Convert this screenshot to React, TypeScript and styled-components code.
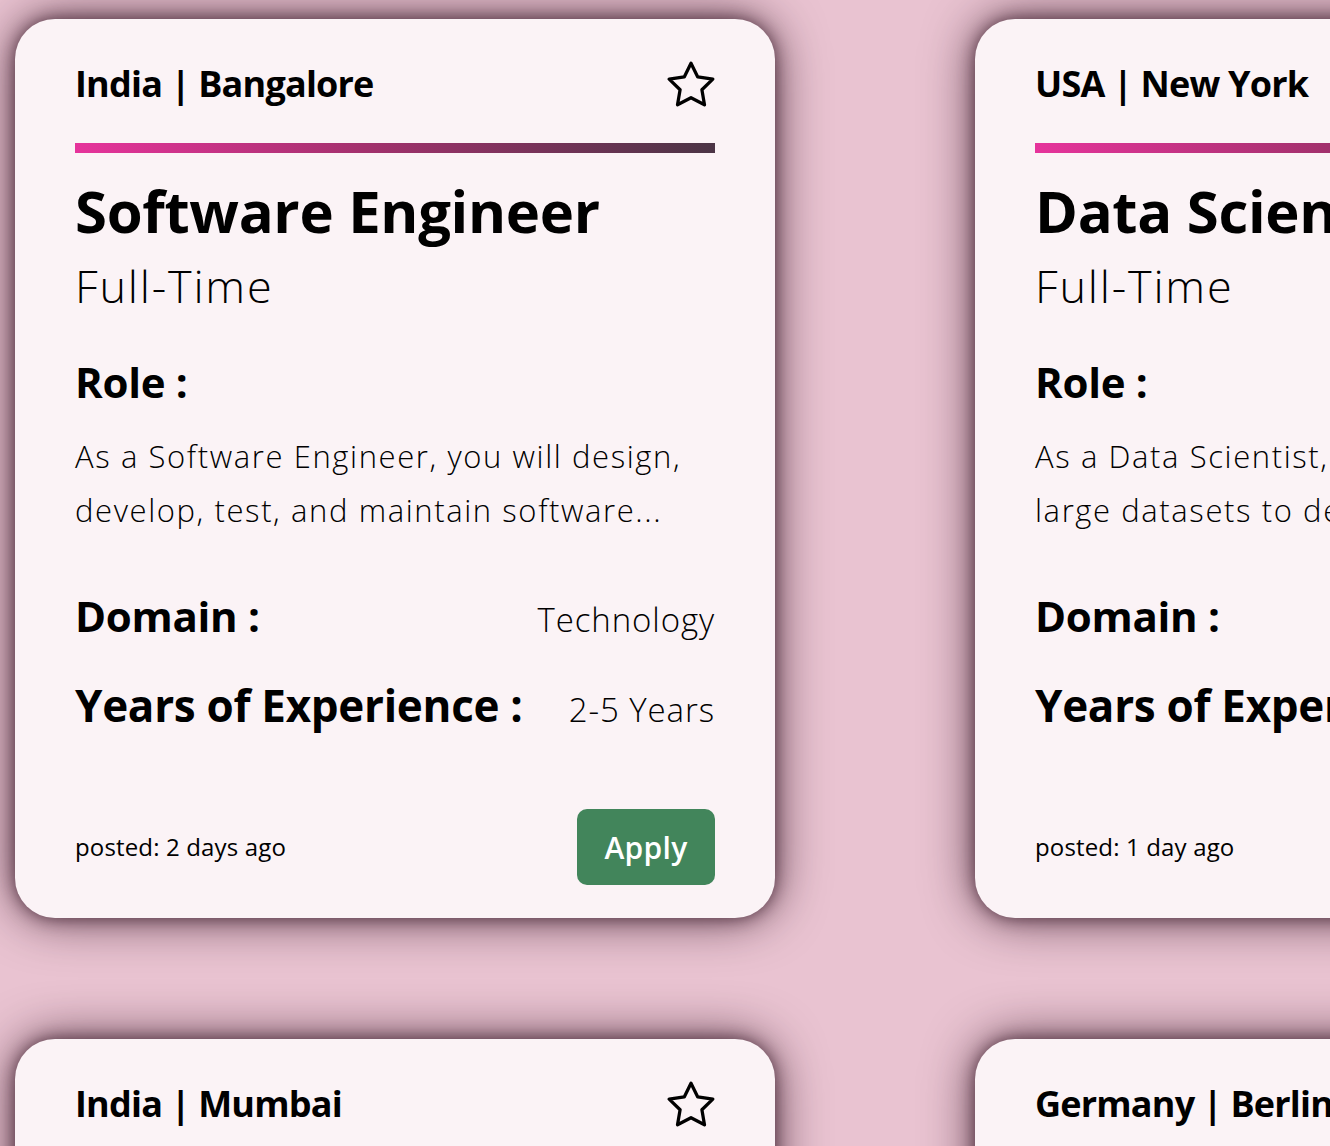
import React from "react";
import styled, { createGlobalStyle } from "styled-components";

const FONT = `"Open Sans", "Noto Sans", sans-serif`;

const Global = createGlobalStyle`
  html, body {
    margin: 0;
    padding: 0;
    overflow: hidden;
    background: #e9c3d1;
  }
  body {
    font-family: ${FONT};
    color: #000;
  }
`;

const Grid = styled.div`
  display: grid;
  grid-template-columns: 760px 760px;
  column-gap: 200px;
  row-gap: 121px;
  padding: 19px 0 0 15px;
  width: max-content;
`;

const Card = styled.article`
  background: #fbf3f6;
  border-radius: 40px;
  box-shadow: 0 0 16px rgba(40, 10, 25, 0.6), 0 0 50px rgba(40, 10, 25, 0.75);
  padding: 42px 60px 33px;
  display: flex;
  flex-direction: column;
`;

const Header = styled.div`
  display: flex;
  align-items: center;
  justify-content: space-between;
  height: 45px;
`;

const Location = styled.h3`
  margin: 0;
  font-size: 36px;
  font-weight: 700;
  line-height: 45px;
  letter-spacing: -0.8px;
`;

const StarButton = styled.button`
  border: 0;
  background: none;
  padding: 0;
  width: 48px;
  height: 46px;
  display: flex;
  align-items: center;
  justify-content: center;
  cursor: pointer;
`;

const Bar = styled.div`
  height: 10px;
  margin-top: 37px;
  background: linear-gradient(90deg, #e6339b 0%, #a3306d 45%, #4b3445 100%);
`;

const Title = styled.h2`
  margin: 23px 0 0;
  font-size: 58px;
  font-weight: 700;
  line-height: 70px;
  letter-spacing: -0.3px;
  white-space: nowrap;
`;

const JobType = styled.div`
  margin-top: 13px;
  font-size: 45px;
  font-weight: 300;
  line-height: 54px;
  letter-spacing: 1.8px;
`;

const Label = styled.span<{ $size?: number }>`
  font-size: ${(p) => p.$size ?? 42}px;
  font-weight: 700;
  line-height: 52px;
  letter-spacing: -0.3px;
  white-space: nowrap;
`;

const RoleLabel = styled(Label)`
  display: block;
  margin-top: 43px;
`;

const Description = styled.p`
  margin: 21px 0 0;
  font-size: 31px;
  font-weight: 300;
  line-height: 54px;
  letter-spacing: 1.6px;
`;

const InfoRow = styled.div<{ $gap: number }>`
  display: flex;
  align-items: baseline;
  justify-content: space-between;
  margin-top: ${(p) => p.$gap}px;
`;

const Value = styled.span`
  font-size: 33px;
  font-weight: 300;
  line-height: 52px;
  letter-spacing: 0.9px;
  white-space: nowrap;
`;

const Footer = styled.div`
  display: flex;
  align-items: center;
  justify-content: space-between;
  margin-top: 73px;
`;

const Posted = styled.span`
  font-size: 24px;
  font-weight: 400;
  line-height: 30px;
  letter-spacing: 0.15px;
`;

const ApplyButton = styled.button`
  width: 138px;
  height: 76px;
  border: 0;
  border-radius: 10px;
  background: #42855b;
  color: #fff;
  font-family: ${FONT};
  font-size: 30px;
  font-weight: 600;
  letter-spacing: 0.3px;
  cursor: pointer;
`;

const StarIcon = () => (
  <svg width="48" height="46" viewBox="1 1 22 21" fill="none" stroke="#000" strokeWidth="1.5" strokeLinejoin="round">
    <polygon points="12 2 15.09 8.26 22 9.27 17 14.14 18.18 21.02 12 17.77 5.82 21.02 7 14.14 2 9.27 8.91 8.26" />
  </svg>
);

type Job = {
  location: string;
  title: string;
  type: string;
  role: string;
  domain: string;
  years: string;
  posted: string;
};

const jobs: Job[] = [
  {
    location: "India | Bangalore",
    title: "Software Engineer",
    type: "Full-Time",
    role: "As a Software Engineer, you will design, develop, test, and maintain software...",
    domain: "Technology",
    years: "2-5 Years",
    posted: "posted: 2 days ago",
  },
  {
    location: "USA | New York",
    title: "Data Scientist",
    type: "Full-Time",
    role: "As a Data Scientist, you will interpret large datasets to derive insights...",
    domain: "Analytics",
    years: "1-3 Years",
    posted: "posted: 1 day ago",
  },
  {
    location: "India | Mumbai",
    title: "Product Manager",
    type: "Full-Time",
    role: "As a Product Manager, you will define the product vision and roadmap...",
    domain: "Management",
    years: "3-6 Years",
    posted: "posted: 3 days ago",
  },
  {
    location: "Germany | Berlin",
    title: "UX Designer",
    type: "Full-Time",
    role: "As a UX Designer, you will craft intuitive and delightful experiences...",
    domain: "Design",
    years: "2-4 Years",
    posted: "posted: 5 days ago",
  },
];

const JobCard = ({ job }: { job: Job }) => (
  <Card>
    <Header>
      <Location>{job.location}</Location>
      <StarButton aria-label="Save job">
        <StarIcon />
      </StarButton>
    </Header>
    <Bar />
    <Title>{job.title}</Title>
    <JobType>{job.type}</JobType>
    <RoleLabel>Role :</RoleLabel>
    <Description>{job.role}</Description>
    <InfoRow $gap={53}>
      <Label>Domain :</Label>
      <Value>{job.domain}</Value>
    </InfoRow>
    <InfoRow $gap={33}>
      <Label $size={44}>Years of Experience :</Label>
      <Value>{job.years}</Value>
    </InfoRow>
    <Footer>
      <Posted>{job.posted}</Posted>
      <ApplyButton>Apply</ApplyButton>
    </Footer>
  </Card>
);

export default function App() {
  return (
    <>
      <Global />
      <Grid>
        {jobs.map((j) => (
          <JobCard key={j.location} job={j} />
        ))}
      </Grid>
    </>
  );
}
